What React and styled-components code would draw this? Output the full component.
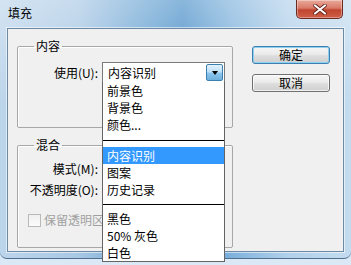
import styled, { createGlobalStyle } from "styled-components";

const Global = createGlobalStyle`
  html, body { margin: 0; padding: 0; }
  body {
    font-family: "Noto Sans CJK SC", "Noto Sans", sans-serif;
    font-size: 12px;
    color: #000;
    background: #d3e4f4;
  }
`;

const Screen = styled.div`
  width: 351px;
  height: 265px;
  overflow: hidden;
  background: linear-gradient(180deg, #c9dcef 0%, #dbe8f5 100%);
`;

const Window = styled.div`
  width: 351px;
  height: 259px;
  box-sizing: border-box;
  display: flex;
  flex-direction: column;
  border-radius: 0 0 7px 7px;
  border-bottom: 1px solid #4e6f90;
  background:
    linear-gradient(180deg, rgba(255,255,255,0.35) 0%, rgba(255,255,255,0) 40%),
    linear-gradient(90deg, #bdd5eb 0%, #a9c8e4 22%, #6ea6d4 40%, #4a8fc8 52%, #7fb2dc 66%, #b2d0ea 82%, #c3dbef 100%);
`;

const TitleBar = styled.div`
  height: 28px;
  display: flex;
  align-items: flex-start;
  padding-left: 8px;
  padding-right: 8px;
`;

const Title = styled.div`
  line-height: 26px;
  font-size: 12px;
`;

const Close = styled.div`
  margin-left: auto;
  width: 47px;
  height: 19px;
  box-sizing: border-box;
  border: 1px solid #6b2a22;
  border-top: none;
  border-radius: 0 0 5px 5px;
  background: linear-gradient(180deg, #eaa99a 0%, #d97a68 45%, #c04530 55%, #cf5f47 100%);
  box-shadow: inset 0 0 0 1px rgba(255,255,255,0.35);
  display: flex;
  align-items: center;
  justify-content: center;
`;

const Client = styled.div`
  position: relative;
  margin: 0 7px 6px 7px;
  flex: 1;
  display: flex;
  background: #f0f0f0;
  border: 1px solid #6c89a6;
  box-shadow: 0 0 0 1px rgba(255,255,255,0.55);
`;

const LeftCol = styled.div`
  padding: 10px 0 0 9px;
  width: 216px;
  display: flex;
  flex-direction: column;
  gap: 10px;
`;

const Group = styled.fieldset`
  margin: 0;
  padding: ${p => p.$pad};
  border: 1px solid #a7a7a7;
  border-radius: 2px;
  box-shadow: inset 1px 1px 0 #fff;
  min-width: 0;
`;

const Legend = styled.legend`
  margin-left: 16px;
  padding: 0 2px;
  line-height: 14px;
  font-size: 12px;
`;

const Row = styled.div`
  display: grid;
  grid-template-columns: 80px 123px;
  column-gap: 4px;
  align-items: center;
  height: 21px;
`;

const Label = styled.span`
  text-align: right;
  white-space: nowrap;
  line-height: 21px;
`;

const Select = styled.div`
  position: relative;
  height: 21px;
  box-sizing: border-box;
  border: 1px solid #7a7a7a;
  background: #fff;
  padding-left: 5px;
  line-height: 19px;
`;

const Arrow = styled.div`
  position: absolute;
  right: 1px;
  top: 1px;
  width: 17px;
  height: 17px;
  box-sizing: border-box;
  border: 1px solid #3c7fb1;
  border-radius: 2px;
  background: linear-gradient(180deg, #e3f2fc 0%, #bfe0f7 45%, #8cc5ec 55%, #6eb0df 100%);
  display: flex;
  align-items: center;
  justify-content: center;
  &::after {
    content: "";
    border-left: 3.5px solid transparent;
    border-right: 3.5px solid transparent;
    border-top: 4px solid #000;
  }
`;

const CheckRow = styled.div`
  display: flex;
  align-items: center;
  gap: 3px;
  width: 74px;
  overflow: hidden;
  margin: 13px 0 0 10px;
  color: #a0a0a0;
  white-space: nowrap;
  line-height: 14px;
`;

const Box = styled.span`
  flex: none;
  width: 13px;
  height: 13px;
  box-sizing: border-box;
  border: 1px solid #b9b9b9;
  background: linear-gradient(180deg, #f0f0f0, #fbfbfb);
`;

const RightCol = styled.div`
  padding: 17px 0 0 19px;
  display: flex;
  flex-direction: column;
  gap: 10px;
`;

const Button = styled.div`
  width: 78px;
  height: 18px;
  box-sizing: border-box;
  border: 1px solid ${p => (p.$default ? "#3c7fb1" : "#707070")};
  border-radius: 3px;
  background: linear-gradient(180deg, #f6f6f6 0%, #ebebeb 45%, #dddddd 55%, #cfcfcf 100%);
  box-shadow: inset 0 0 0 1px ${p => (p.$default ? "#8fcfef" : "rgba(255,255,255,0.7)")};
  display: flex;
  align-items: center;
  justify-content: center;
  line-height: 16px;
`;

const Popup = styled.div`
  position: absolute;
  left: 94px;
  top: 53px;
  width: 123px;
  box-sizing: border-box;
  border: 1px solid #646464;
  border-top: none;
  background: #fff;
  z-index: 2;
`;

const Item = styled.div`
  height: 17px;
  line-height: 17px;
  padding-left: 4px;
  white-space: nowrap;
  background: ${p => (p.$active ? "#3399ff" : "transparent")};
  color: ${p => (p.$active ? "#fff" : "#000")};
`;

const Sep = styled.div`
  height: ${p => p.$h}px;
  display: flex;
  align-items: center;
  &::after {
    content: "";
    flex: 1;
    height: 1px;
    background: #000;
  }
`;

const items = [
  ["前景色"],
  ["背景色"],
  ["颜色..."],
  ["sep", 14],
  ["内容识别", true],
  ["图案"],
  ["历史记录"],
  ["sep", 12],
  ["黑色"],
  ["50% 灰色"],
  ["白色"],
];

function App() {
  return (
    <Screen>
      <Global />
      <Window>
        <TitleBar>
          <Title>填充</Title>
          <Close>
            <svg width="14" height="11" viewBox="0 0 14 11">
              <path d="M2 1.5 L12 9.5 M12 1.5 L2 9.5" stroke="#5a1a12" strokeWidth="3.6" strokeLinecap="round" />
              <path d="M2 1.5 L12 9.5 M12 1.5 L2 9.5" stroke="#fff" strokeWidth="2.2" strokeLinecap="round" />
            </svg>
          </Close>
        </TitleBar>
        <Client>
          <LeftCol>
            <Group $pad="9px 0 44px 0">
              <Legend>内容</Legend>
              <Row>
                <Label>使用(U):</Label>
                <Select>
                  内容识别
                  <Arrow />
                </Select>
              </Row>
            </Group>
            <Group $pad="6px 0 20px 0">
              <Legend>混合</Legend>
              <Row>
                <Label>模式(M):</Label>
                <span />
              </Row>
              <Row>
                <Label>不透明度(O):</Label>
                <span />
              </Row>
              <CheckRow>
                <Box />
                保留透明区域
              </CheckRow>
            </Group>
          </LeftCol>
          <RightCol>
            <Button $default>确定</Button>
            <Button>取消</Button>
          </RightCol>
          <Popup>
            {items.map(([text, extra], i) =>
              text === "sep" ? (
                <Sep key={i} $h={extra} />
              ) : (
                <Item key={i} $active={extra === true}>
                  {text}
                </Item>
              )
            )}
          </Popup>
        </Client>
      </Window>
    </Screen>
  );
}

export default App;
